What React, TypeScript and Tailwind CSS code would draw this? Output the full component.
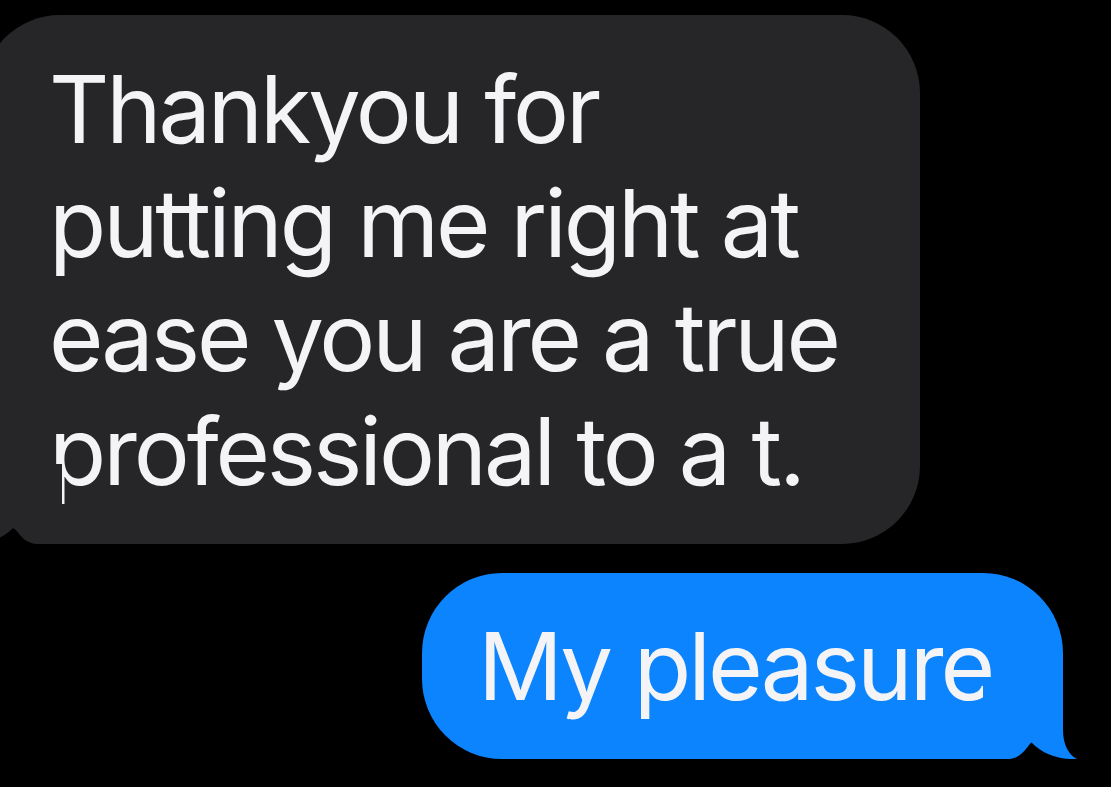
import React from "react";

const incomingLines = [
  "Thankyou for",
  "putting me right at",
  "ease you are a true",
  "professional to a t.",
];

// bubble tail, drawn for the right side; mirrored for incoming
const Tail = ({ color, className }: { color: string; className: string }) => (
  <svg
    width="94"
    height="80"
    viewBox="0 0 94 80"
    className={className}
    aria-hidden
  >
    <path
      d="M0 0 H80 V51 C80 66 86 76 94 80 C78 81 60 76 48 63 C42 72 36 80 24 80 H0 Z"
      fill={color}
    />
  </svg>
);

const App = () => {
  return (
    <div
      className="w-[1111px] h-[787px] bg-black overflow-hidden pt-[15px] flex flex-col antialiased"
      style={{ fontFamily: "Inter, 'Noto Sans', sans-serif" }}
    >
      <div className="relative ml-[-18px] w-[938px] h-[529px] bg-[#262628] rounded-[78px] pl-[67px] pt-[37px] text-[#f4f4f6] text-[93.5px] leading-[114px] tracking-[-3.1px]">
        {incomingLines.map((line) => (
          <div key={line} className="whitespace-nowrap">
            {line}
          </div>
        ))}
        <Tail
          color="#262628"
          className="absolute left-[-14px] bottom-0 -scale-x-100"
        />
      </div>

      <div className="flex justify-end pr-[48px] mt-[29px]">
        <div className="relative w-[641px] h-[186px] bg-[#0b84fe] rounded-[80px] pl-[56px] pt-[36px] text-[#f4f4f6] text-[94px] leading-[114px] tracking-[-3px] whitespace-nowrap">
          My pleasure
          <Tail color="#0b84fe" className="absolute right-[-14px] bottom-0" />
        </div>
      </div>
    </div>
  );
};

export default App;
